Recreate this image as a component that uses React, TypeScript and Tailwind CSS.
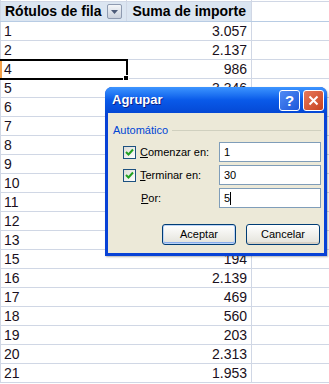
import React from "react";

const rows: [string, string][] = [
  ["1", "3.057"],
  ["2", "2.137"],
  ["4", "986"],
  ["5", "3.346"],
  ["6", "1.204"],
  ["7", "845"],
  ["8", "2.410"],
  ["9", "312"],
  ["10", "1.098"],
  ["11", "756"],
  ["12", "2.004"],
  ["13", "431"],
  ["15", "194"],
  ["16", "2.139"],
  ["17", "469"],
  ["18", "560"],
  ["19", "203"],
  ["20", "2.313"],
  ["21", "1.953"],
];

const Check = () => (
  <div className="w-[13px] h-[13px] border border-[#1c5180] bg-gradient-to-br from-[#dcdcd7] to-white flex items-center justify-center">
    <svg width="9" height="9" viewBox="0 0 9 9">
      <path d="M1 4 L3.5 6.5 L8 1.5" stroke="#21a121" strokeWidth="2" fill="none" />
    </svg>
  </div>
);

const Field = ({ value, caret }: { value: string; caret?: boolean }) => (
  <div className="w-[102px] h-[20px] border border-[#7f9db9] bg-white flex items-center pl-[4px] text-black">
    <span>{value}</span>
    {caret && <span className="w-px h-[13px] bg-black" />}
  </div>
);

export default function App() {
  return (
    <div className="relative w-[329px] h-[384px] overflow-hidden bg-white font-['Liberation_Sans',Arial,sans-serif]">
      {/* Sheet */}
      <div className="h-[2px] flex border-b border-[#d0d7e5]">
        <div className="w-[127px] border-l border-r border-[#d0d7e5]" />
        <div className="w-[125px] border-r border-[#d0d7e5]" />
      </div>
      <div className="h-[20px] flex border-b border-[#b8cce4] text-[14px] font-bold text-black">
        <div className="w-[127px] bg-[#dbe5f1] border-l border-r border-[#d0d7e5] flex items-center pl-[4px] gap-[6px]">
          <span>Rótulos de fila</span>
          <div className="w-[15px] h-[15px] rounded-[2px] border border-[#8e9ab0] bg-gradient-to-b from-[#f4f6f9] to-[#c9d0dc] flex items-center justify-center">
            <svg width="7" height="4" viewBox="0 0 7 4">
              <path d="M0 0 L7 0 L3.5 4 Z" fill="#4c5a78" />
            </svg>
          </div>
        </div>
        <div className="w-[125px] bg-[#dbe5f1] border-r border-[#d0d7e5] flex items-center justify-end pr-[5px]">
          Suma de importe
        </div>
        <div className="flex-1" />
      </div>
      {rows.map(([label, value]) => (
        <div
          key={label}
          className="h-[19px] flex border-b border-[#d0d7e5] text-[14px] text-[#1a1020]"
        >
          <div className="w-[127px] border-l border-[#d0d7e5] flex items-center pl-[3px]">{label}</div>
          <div className="w-[125px] border-r border-[#d0d7e5] flex items-center justify-end pr-[4px]">
            {value}
          </div>
          <div className="flex-1" />
        </div>
      ))}

      {/* Active cell */}
      <div className="absolute z-10 left-0 top-[59px] w-[128px] h-[21px] border-2 border-black" />
      <div className="absolute z-10 left-0 top-[61px] w-[2px] h-[17px] bg-[#f4a24a]" />
      <div className="absolute z-10 left-[123px] top-[75px] w-[6px] h-[6px] bg-black border border-white" />

      {/* Agrupar dialog */}
      <div className="absolute z-20 left-[105px] top-[87px] w-[222px] h-[169px] rounded-t-[7px] bg-[#0842d6] flex flex-col text-[11px] shadow-[1px_1px_2px_rgba(0,0,0,0.3)]">
        <div className="h-[26px] rounded-t-[7px] bg-gradient-to-b from-[#3d95ff] via-[#0a5ae9] to-[#0548d5] flex items-center pl-[7px] pr-[3px]">
          <span className="flex-1 text-white font-bold text-[13px] [text-shadow:1px_1px_0_#0a1f8a]">Agrupar</span>
          <div className="w-[21px] h-[21px] rounded-[3px] border border-white bg-gradient-to-br from-[#4f8bf5] to-[#1e55d9] flex items-center justify-center text-white font-bold text-[15px] leading-none">
            ?
          </div>
          <div className="ml-[3px] w-[21px] h-[21px] rounded-[3px] border border-white bg-gradient-to-br from-[#e8795a] to-[#c6401c] flex items-center justify-center">
            <svg width="11" height="11" viewBox="0 0 11 11">
              <path d="M1.5 1.5 L9.5 9.5 M9.5 1.5 L1.5 9.5" stroke="white" strokeWidth="2" />
            </svg>
          </div>
        </div>
        <div className="flex-1 mx-[3px] mb-[3px] bg-[#ece9d8] flex flex-col text-black">
          <div className="mt-[11px] h-[13px] flex items-center pl-[5px] pr-[3px]">
            <span className="text-[#0046d5]">Automático</span>
            <div className="flex-1 ml-[4px] h-px bg-[#d0d0bf]" />
          </div>
          <div className="mt-[5px] flex flex-col gap-[3px]">
            <div className="flex items-center pl-[15px]">
              <div className="w-[96px] flex items-center gap-[4px]">
                <Check />
                <span><span className="underline">C</span>omenzar en:</span>
              </div>
              <Field value="1" />
            </div>
            <div className="flex items-center pl-[15px]">
              <div className="w-[96px] flex items-center gap-[4px]">
                <Check />
                <span><span className="underline">T</span>erminar en:</span>
              </div>
              <Field value="30" />
            </div>
            <div className="flex items-center pl-[15px]">
              <div className="w-[96px] pl-[18px]">
                <span className="underline">P</span>or:
              </div>
              <Field value="5" caret />
            </div>
          </div>
          <div className="mt-[16px] flex justify-end gap-[10px] pr-[4px]">
            <button className="w-[74px] h-[21px] rounded-[3px] border border-[#003c74] bg-gradient-to-b from-white to-[#e3e2da] shadow-[inset_0_0_0_1px_#bcd4f6,inset_0_-1px_0_1px_#89adec] text-[11px]">
              Aceptar
            </button>
            <button className="w-[74px] h-[21px] rounded-[3px] border border-[#003c74] bg-gradient-to-b from-white to-[#e3e2da] shadow-[inset_0_-2px_0_#d6d0c5] text-[11px]">
              Cancelar
            </button>
          </div>
        </div>
      </div>
    </div>
  );
}
